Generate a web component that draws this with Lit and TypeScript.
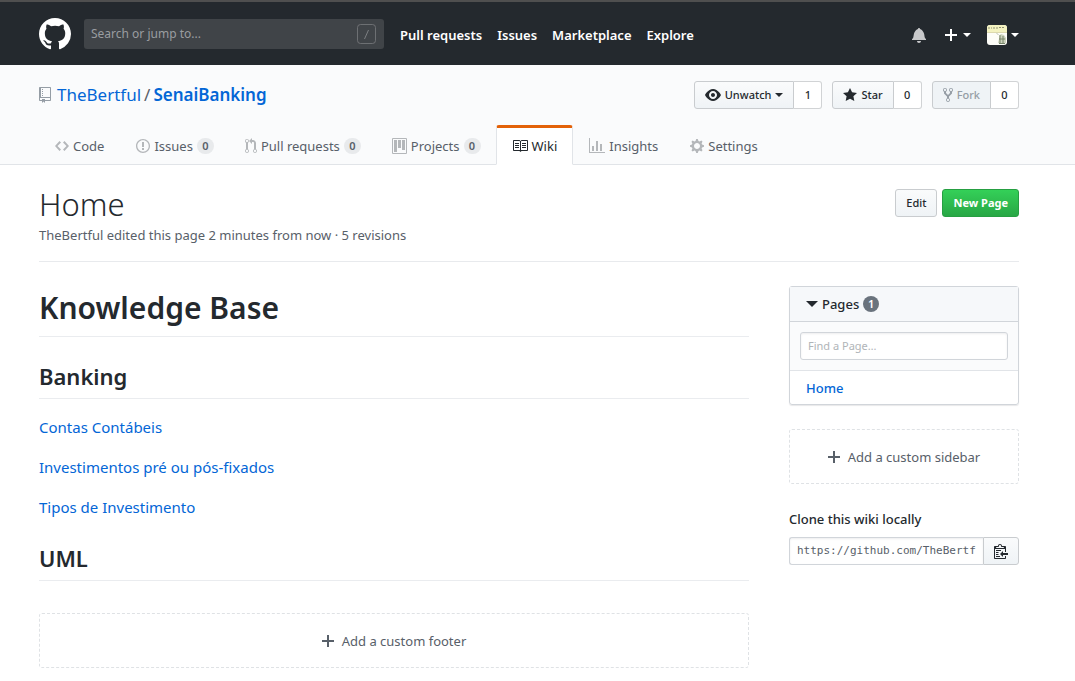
import { LitElement, html, css, svg, nothing } from "lit";
import { customElement, property } from "lit/decorators.js";
import { classMap } from "lit/directives/class-map.js";

type Icon = { w: number; d: string };

const ICONS: Record<string, Icon> = {
  github: { w: 16, d: "M8 0C3.58 0 0 3.58 0 8c0 3.54 2.29 6.53 5.47 7.59.4.07.55-.17.55-.38 0-.19-.01-.82-.01-1.49-2.01.37-2.53-.49-2.69-.94-.09-.23-.48-.94-.82-1.13-.28-.15-.68-.52-.01-.53.63-.01 1.08.58 1.23.82.72 1.21 1.87.87 2.33.66.07-.52.28-.87.51-1.07-1.78-.2-3.64-.89-3.64-3.95 0-.87.31-1.59.82-2.15-.08-.2-.36-1.02.08-2.12 0 0 .67-.21 2.2.82.64-.18 1.32-.27 2-.27.68 0 1.36.09 2 .27 1.53-1.04 2.2-.82 2.2-.82.44 1.1.16 1.92.08 2.12.51.56.82 1.27.82 2.15 0 3.07-1.87 3.75-3.65 3.95.29.25.54.73.54 1.48 0 1.07-.01 1.93-.01 2.2 0 .21.15.46.55.38A8.013 8.013 0 0 0 16 8c0-4.42-3.58-8-8-8z" },
  bell: { w: 14, d: "M14 12v1H0v-1l.73-.58c.77-.77.81-2.55 1.19-4.42C2.69 3.23 6 2 6 2c0-.55.45-1 1-1s1 .45 1 1c0 0 3.39 1.23 4.16 5 .38 1.88.42 3.66 1.19 4.42l.66.58H14zm-7 4c1.11 0 2-.89 2-2H5c0 1.11.89 2 2 2z" },
  plus: { w: 12, d: "M12 9H7v5H5V9H0V7h5V2h2v5h5v2z" },
  repo: { w: 12, d: "M4 9H3V8h1v1zm0-3H3v1h1V6zm0-2H3v1h1V4zm0-2H3v1h1V2zm8-1v12c0 .55-.45 1-1 1H6v2l-1.5-1.5L3 16v-2H1c-.55 0-1-.45-1-1V1c0-.55.45-1 1-1h10c.55 0 1 .45 1 1zm-1 10H1v2h2v-1h3v1h5v-2zm0-10H2v9h9V1z" },
  eye: { w: 16, d: "M8.06 2C3 2 0 8 0 8s3 6 8.06 6C13 14 16 8 16 8s-3-6-7.94-6zM8 12c-2.2 0-4-1.78-4-4 0-2.2 1.8-4 4-4 2.22 0 4 1.8 4 4 0 2.22-1.78 4-4 4zm2-4c0 1.11-.89 2-2 2-1.11 0-2-.89-2-2 0-1.11.89-2 2-2 1.11 0 2 .89 2 2z" },
  star: { w: 14, d: "M14 6l-4.9-.64L7 1 4.9 5.36 0 6l3.6 3.26L2.67 14 7 11.67 11.33 14l-.93-4.74L14 6z" },
  fork: { w: 10, d: "M8 1a1.993 1.993 0 0 0-1 3.72V6L5 8 3 6V4.72A1.993 1.993 0 0 0 2 1a1.993 1.993 0 0 0-1 3.72V6.5l3 3v1.78A1.993 1.993 0 0 0 5 15a1.993 1.993 0 0 0 1-3.72V9.5l3-3V4.72A1.993 1.993 0 0 0 8 1zM2 4.2C1.34 4.2.8 3.65.8 3c0-.65.55-1.2 1.2-1.2.65 0 1.2.55 1.2 1.2 0 .65-.55 1.2-1.2 1.2zm3 10c-.66 0-1.2-.55-1.2-1.2 0-.65.55-1.2 1.2-1.2.65 0 1.2.55 1.2 1.2 0 .65-.55 1.2-1.2 1.2zm3-10c-.66 0-1.2-.55-1.2-1.2 0-.65.55-1.2 1.2-1.2.65 0 1.2.55 1.2 1.2 0 .65-.55 1.2-1.2 1.2z" },
  code: { w: 14, d: "M9.5 3L8 4.5 11.5 8 8 11.5 9.5 13 14 8 9.5 3zm-5 0L0 8l4.5 5L6 11.5 2.5 8 6 4.5 4.5 3z" },
  issue: { w: 14, d: "M7 2.3c3.14 0 5.7 2.56 5.7 5.7s-2.56 5.7-5.7 5.7A5.71 5.71 0 0 1 1.3 8c0-3.14 2.56-5.7 5.7-5.7zM7 1C3.14 1 0 4.14 0 8s3.14 7 7 7 7-3.14 7-7-3.14-7-7-7zm1 3H6v5h2V4zm0 6H6v2h2v-2z" },
  pull: { w: 12, d: "M11 11.28V5c-.03-.78-.34-1.47-.94-2.06C9.46 2.35 8.78 2.03 8 2H7V0L4 3l3 3V4h1c.27.02.48.11.69.31.21.2.3.42.31.69v6.28A1.993 1.993 0 0 0 10 15a1.993 1.993 0 0 0 1-3.72zm-1 2.92c-.66 0-1.2-.55-1.2-1.2 0-.65.55-1.2 1.2-1.2.65 0 1.2.55 1.2 1.2 0 .65-.55 1.2-1.2 1.2zM4 3c0-1.11-.89-2-2-2a1.993 1.993 0 0 0-1 3.72v6.56A1.993 1.993 0 0 0 2 15a1.993 1.993 0 0 0 1-3.72V4.72c.59-.34 1-.98 1-1.72zm-.8 10c0 .66-.55 1.2-1.2 1.2-.65 0-1.2-.55-1.2-1.2 0-.65.55-1.2 1.2-1.2.65 0 1.2.55 1.2 1.2zM2 4.2C1.34 4.2.8 3.65.8 3c0-.65.55-1.2 1.2-1.2.65 0 1.2.55 1.2 1.2 0 .65-.55 1.2-1.2 1.2z" },
  project: { w: 15, d: "M10 12h3V2h-3v10zm-4-2h3V2H6v8zm-4 4h3V2H2v12zm-1 1h13V1H1v14zM14 0H1a1 1 0 0 0-1 1v14a1 1 0 0 0 1 1h13a1 1 0 0 0 1-1V1a1 1 0 0 0-1-1z" },
  book: { w: 16, d: "M3 5h4v1H3V5zm0 3h4V7H3v1zm0 2h4V9H3v1zm11-5h-4v1h4V5zm0 2h-4v1h4V7zm0 2h-4v1h4V9zm2-6v9c0 .55-.45 1-1 1H9.5l-1 1-1-1H2c-.55 0-1-.45-1-1V3c0-.55.45-1 1-1h5.5l1 1 1-1H15c.55 0 1 .45 1 1zm-8 .5L7.5 3H2v9h6V3.5zm7-.5H9.5l-.5.5V12h6V3z" },
  graph: { w: 16, d: "M16 14v1H0V0h1v14h15zM5 13H3V8h2v5zm4 0H7V3h2v10zm4 0h-2V6h2v7z" },
  gear: { w: 14, d: "M14 8.77v-1.6l-1.94-.64-.45-1.09.88-1.84-1.13-1.13-1.81.91-1.09-.45-.69-1.92h-1.6l-.63 1.94-1.11.45-1.84-.88-1.13 1.13.91 1.81-.45 1.09L0 7.23v1.59l1.94.64.45 1.09-.88 1.84 1.13 1.13 1.81-.91 1.09.45.69 1.92h1.59l.63-1.94 1.11-.45 1.84.88 1.13-1.13-.92-1.81.47-1.09L14 8.75v.02zM7 11c-1.66 0-3-1.34-3-3s1.34-3 3-3 3 1.34 3 3-1.34 3-3 3z" },
  clippy: { w: 14, d: "M2 13h4v1H2v-1zm5-6H2v1h5V7zm2 3V8l-3 3 3 3v-2h5v-2H9zM4.5 9H2v1h2.5V9zM2 12h2.5v-1H2v1zm9 1h1v2c-.02.28-.11.52-.3.7-.19.18-.42.28-.7.3H1c-.55 0-1-.45-1-1V4c0-.55.45-1 1-1h3c0-1.11.89-2 2-2 1.11 0 2 .89 2 2h3c.55 0 1 .45 1 1v5h-1V6H1v9h10v-2zM2 5h8c0-.55-.45-1-1-1H8c-.55 0-1-.45-1-1s-.45-1-1-1-1 .45-1 1-.45 1-1 1H3c-.55 0-1 .45-1 1z" },
};

const icon = (name: string, size = 16) => {
  const { w, d } = ICONS[name];
  return html`<svg class="icon" aria-hidden="true" width=${(w * size) / 16} height=${size} viewBox="0 0 ${w} 16">
    ${svg`<path fill-rule="evenodd" fill="currentColor" d=${d}></path>`}
  </svg>`;
};

const shared = css`
  :host {
    display: block;
    font-family: "Noto Sans", "Open Sans", sans-serif;
    font-size: 13px;
    line-height: 20px;
    color: #24292e;
  }
  *, *::before, *::after { box-sizing: border-box; }
  .icon { display: block; flex: none; }
  .caret {
    flex: none;
    width: 0;
    height: 0;
    border: 4px solid transparent;
    border-top-color: currentColor;
    border-bottom-width: 0;
  }
  a { color: #0366d6; text-decoration: none; }
  button, input { font-family: inherit; color: inherit; }
  button { cursor: pointer; }
  .wrap { padding: 0 56px 0 39px; }
`;

@customElement("site-header")
export class SiteHeader extends LitElement {
  static styles = [shared, css`
    .bar {
      display: flex;
      align-items: center;
      height: 65px;
      border-top: 2px solid #4f4f4f;
      background: #24292e;
      color: #fff;
    }
    .logo { color: #fff; margin-right: 13px; }
    .search {
      display: flex;
      align-items: center;
      flex: 0 1 300px;
      height: 30px;
      padding: 0 8px 0 7px;
      border-radius: 3px;
      background: #404448;
    }
    .search input {
      flex: 1;
      min-width: 0;
      padding: 1px 0 0;
      border: 0;
      outline: 0;
      background: none;
      font-size: 12px;
      line-height: 20px;
      color: #fff;
    }
    .search input::placeholder { color: #9a9da0; opacity: 1; }
    .key { display: block; color: #7c7f82; }
    .links { display: flex; gap: 15px; margin-left: 16px; padding-top: 2px; flex: 1; }
    .links a { color: #fff; font-weight: 600; }
    .tools { display: flex; align-items: center; gap: 16px; padding-top: 3px; }
    .tool {
      display: flex;
      align-items: center;
      gap: 6px;
      padding: 0;
      border: 0;
      background: none;
      color: #fff;
    }
    .bell { color: #c8c9cb; padding-right: 3px; }
    .user { gap: 4px; }
    .avatar { display: block; border-radius: 3px; }
  `];

  render() {
    return html`
      <header class="bar wrap">
        <a class="logo" href="#" aria-label="Homepage">${icon("github", 32)}</a>
        <label class="search">
          <input type="text" placeholder="Search or jump to..." aria-label="Search or jump to" />
          <svg class="key" width="19" height="20" viewBox="0 0 19 20" fill="none" stroke="currentColor" aria-hidden="true">
            <rect x="0.5" y="0.5" width="18" height="19" rx="3" stroke-opacity=".75"></rect>
            <path d="M11.5 6l-4 9"></path>
          </svg>
        </label>
        <nav class="links">
          ${["Pull requests", "Issues", "Marketplace", "Explore"].map((t) => html`<a href="#">${t}</a>`)}
        </nav>
        <div class="tools">
          <button class="tool bell" aria-label="Notifications">${icon("bell")}</button>
          <button class="tool" aria-label="Create new">${icon("plus")}<span class="caret"></span></button>
          <button class="tool user" aria-label="Profile">
            <svg class="avatar" width="20" height="20" viewBox="0 0 20 20" aria-hidden="true">
              <rect width="20" height="20" fill="#fdfdf8"></rect>
              <rect width="20" height="7" fill="#f3f2c0"></rect>
              <path d="M1 3h4M6 3h5M12 2.500h6" stroke="#8f9072" stroke-dasharray="2 1"></path>
              <path d="M0 7.500h20" stroke="#dcd9ae"></path>
              <path d="M12 11l2-2 3 1 2 3v5l-4 1-4-1 1-4z" fill="#cdd3bd"></path>
              <path d="M13 10v8M16 11v7M12 14h6M10 8.500l1 1M12 18.500h6" stroke="#78866b" fill="none"></path>
            </svg>
            <span class="caret"></span>
          </button>
        </div>
      </header>`;
  }
}

interface Tab { label: string; icon: string; count?: number; selected?: boolean }

@customElement("repo-head")
export class RepoHead extends LitElement {
  static styles = [shared, css`
    .head {
      background: #fafbfc;
      border-bottom: 1px solid #e1e4e8;
      padding-top: 16px;
    }
    .top { display: flex; justify-content: space-between; align-items: center; }
    .title {
      display: flex;
      align-items: center;
      margin: 0;
      font-size: 17px;
      line-height: 28px;
      font-weight: 400;
    }
    .title .icon { color: #959da5; margin-right: 6px; }
    .slash { margin: 0 3px; color: #586069; }
    .title strong { font-weight: 600; }
    .actions { display: flex; gap: 10px; margin: 0; padding: 0; list-style: none; }
    .actions li { display: flex; }
    .btn {
      display: flex;
      align-items: center;
      gap: 4px;
      height: 28px;
      padding: 0 10px;
      border: 1px solid #c9cccf;
      border-radius: 3px 0 0 3px;
      background: linear-gradient(#fafbfc, #eff3f6);
      font-size: 11px;
      line-height: 20px;
      font-weight: 500;
    }
    .btn[disabled] { color: #959da5; background: #eff3f6; }
    .num {
      min-width: 28px;
      height: 28px;
      padding: 0 10px;
      border: 1px solid #d1d3d5;
      border-left: 0;
      border-radius: 0 3px 3px 0;
      background: #fff;
      color: #24292e;
      font-size: 11px;
      line-height: 26px;
      font-weight: 500;
      text-align: center;
    }
    .tabs { display: flex; margin-top: 16px; margin-bottom: -1px; }
    .tab {
      display: flex;
      align-items: center;
      gap: 4px;
      height: 40px;
      padding: 3px 15px 0;
      border: 1px solid transparent;
      border-top: 0;
      color: #586069;
      white-space: nowrap;
    }
    .tab .icon { color: #b4b7ba; }
    .tab.selected {
      padding-top: 0;
      border-top: 3px solid #e36209;
      border-left-color: #e1e4e8;
      border-right-color: #e1e4e8;
      border-radius: 3px 3px 0 0;
      background: #fff;
      color: #24292e;
    }
    .tab.selected .icon { color: #24292e; }
    .count {
      min-width: 17px;
      padding: 0 5px;
      margin-right: -1px;
      border-radius: 8px;
      background: #e8eaec;
      font-size: 11px;
      line-height: 16px;
      font-weight: 600;
      text-align: center;
    }
  `];

  private actions = [
    { label: "Unwatch", icon: "eye", count: 1, caret: true },
    { label: "Star", icon: "star", count: 0 },
    { label: "Fork", icon: "fork", count: 0, disabled: true },
  ];

  private tabs: Tab[] = [
    { label: "Code", icon: "code" },
    { label: "Issues", icon: "issue", count: 0 },
    { label: "Pull requests", icon: "pull", count: 0 },
    { label: "Projects", icon: "project", count: 0 },
    { label: "Wiki", icon: "book", selected: true },
    { label: "Insights", icon: "graph" },
    { label: "Settings", icon: "gear" },
  ];

  render() {
    return html`
      <div class="head wrap">
        <div class="top">
          <h1 class="title">
            ${icon("repo")}<a href="#">TheBertful</a><span class="slash">/</span><strong><a href="#">SenaiBanking</a></strong>
          </h1>
          <ul class="actions">
            ${this.actions.map((a) => html`<li>
              <button class="btn" ?disabled=${a.disabled}>
                ${icon(a.icon)}<span>${a.label}</span>${a.caret ? html`<span class="caret"></span>` : nothing}
              </button>
              <a class="num" href="#">${a.count}</a>
            </li>`)}
          </ul>
        </div>
        <nav class="tabs">
          ${this.tabs.map((t) => html`<a href="#" class=${classMap({ tab: true, selected: !!t.selected })}>
            ${icon(t.icon)}<span>${t.label}</span>${t.count === undefined ? nothing : html`<span class="count">${t.count}</span>`}
          </a>`)}
        </nav>
      </div>`;
  }
}

@customElement("dashed-link")
export class DashedLink extends LitElement {
  static styles = [shared, css`
    .box {
      display: flex;
      align-items: center;
      justify-content: center;
      gap: 8px;
      height: 55px;
      border: 1px dashed #dfe2e5;
      border-radius: 3px;
      color: #586069;
    }
  `];
  @property() label = "";
  render() {
    return html`<a class="box" href="#">${icon("plus")}<span>${this.label}</span></a>`;
  }
}

@customElement("wiki-sidebar")
export class WikiSidebar extends LitElement {
  static styles = [shared, css`
    .pages {
      border: 1px solid #d1d5da;
      border-radius: 3px;
      box-shadow: 0 1px 1px rgba(27, 31, 35, 0.1);
      margin-bottom: 24px;
    }
    .heading {
      display: flex;
      align-items: center;
      gap: 4px;
      width: 100%;
      height: 35px;
      padding: 0 16px;
      border: 0;
      border-bottom: 1px solid #d1d5da;
      background: #f6f8fa;
      font-size: 13px;
      font-weight: 500;
    }
    .heading .caret { border-width: 6px 6px 0; }
    .badge {
      width: 16px;
      height: 16px;
      border-radius: 8px;
      background: #6a737d;
      color: #fff;
      font-size: 11px;
      line-height: 16px;
      font-weight: 600;
      text-align: center;
    }
    .filter { padding: 10px; background: #fafbfc; border-bottom: 1px solid #e1e4e8; }
    .field {
      width: 100%;
      height: 28px;
      padding: 0 7px 1px;
      border: 1px solid #d1d5da;
      border-radius: 3px;
      outline: 0;
      background: #fff;
      box-shadow: inset 0 1px 2px rgba(27, 31, 35, 0.075);
      font-size: 11px;
      line-height: 20px;
    }
    .field::placeholder { color: #b0b4b8; opacity: 1; }
    .page { display: block; padding: 7px 16px 6px; font-weight: 500; }
    .clone { display: block; margin: 25px 0 8px; font-weight: 500; }
    .group { display: flex; }
    .group .field {
      flex: 1;
      min-width: 0;
      border-right: 0;
      border-radius: 3px 0 0 3px;
      font: 11px/20px "DejaVu Sans Mono", monospace;
      color: #586069;
    }
    .copy {
      display: flex;
      align-items: center;
      padding: 0 10px;
      border: 1px solid #c9cccf;
      border-radius: 0 3px 3px 0;
      background: linear-gradient(#fafbfc, #eff3f6);
    }
  `];

  render() {
    return html`
      <section class="pages">
        <button class="heading" aria-expanded="true"><span class="caret"></span>Pages <span class="badge">1</span></button>
        <div class="filter"><input class="field" type="text" placeholder="Find a Page…" aria-label="Find a Page" /></div>
        <a class="page" href="#">Home</a>
      </section>
      <dashed-link label="Add a custom sidebar"></dashed-link>
      <label class="clone" for="clone-url">Clone this wiki locally</label>
      <div class="group">
        <input id="clone-url" class="field" type="text" readonly value="https://github.com/TheBertful/SenaiBanking.wiki.git" />
        <button class="copy" aria-label="Copy to clipboard">${icon("clippy")}</button>
      </div>`;
  }
}

@customElement("app-root")
export class AppRoot extends LitElement {
  static styles = [shared, css`
    :host { min-height: 100vh; background: #fff; }
    .intro {
      display: flex;
      justify-content: space-between;
      align-items: flex-start;
      margin-bottom: 24px;
      padding: 24px 0 16px;
      border-bottom: 1px solid #e8eaed;
    }
    .name { margin: 0; font-size: 31px; line-height: 30px; font-weight: 300; }
    .meta { margin: 6px 0 0; color: #586069; }
    .buttons { display: flex; gap: 5px; }
    .btn {
      height: 28px;
      padding: 0 10px;
      border: 1px solid #c9cccf;
      border-radius: 3px;
      background: linear-gradient(#fafbfc, #eff3f6);
      font-size: 11px;
      line-height: 20px;
      font-weight: 500;
    }
    .primary {
      border-color: #269f42;
      background: linear-gradient(#34d058, #28a745);
      color: #fff;
      font-weight: 700;
    }
    .columns { display: grid; grid-template-columns: minmax(0, 1fr) 230px; gap: 40px; }
    h2, h3 { margin: 0; border-bottom: 1px solid #eaecef; font-weight: 600; }
    h2 { padding-bottom: 6px; font-size: 30px; line-height: 44px; }
    h3 { padding-bottom: 8px; font-size: 22px; line-height: 28px; }
    .content { display: flex; flex-direction: column; }
    .content h3 { margin-top: 25px; }
    .entry { margin: 16px 0 0; font-size: 15px; line-height: 24px; }
    .foot { margin-top: 32px; }
  `];

  render() {
    return html`
      <site-header></site-header>
      <repo-head></repo-head>
      <main class="wrap">
        <div class="intro">
          <div>
            <h1 class="name">Home</h1>
            <p class="meta">TheBertful edited this page 2 minutes from now · 5 revisions</p>
          </div>
          <div class="buttons">
            <button class="btn">Edit</button>
            <button class="btn primary">New Page</button>
          </div>
        </div>
        <div class="columns">
          <article class="content">
            <h2>Knowledge Base</h2>
            <h3>Banking</h3>
            ${["Contas Contábeis", "Investimentos pré ou pós-fixados", "Tipos de Investimento"].map(
              (t) => html`<p class="entry"><a href="#">${t}</a></p>`
            )}
            <h3>UML</h3>
            <dashed-link class="foot" label="Add a custom footer"></dashed-link>
          </article>
          <wiki-sidebar></wiki-sidebar>
        </div>
      </main>`;
  }
}
